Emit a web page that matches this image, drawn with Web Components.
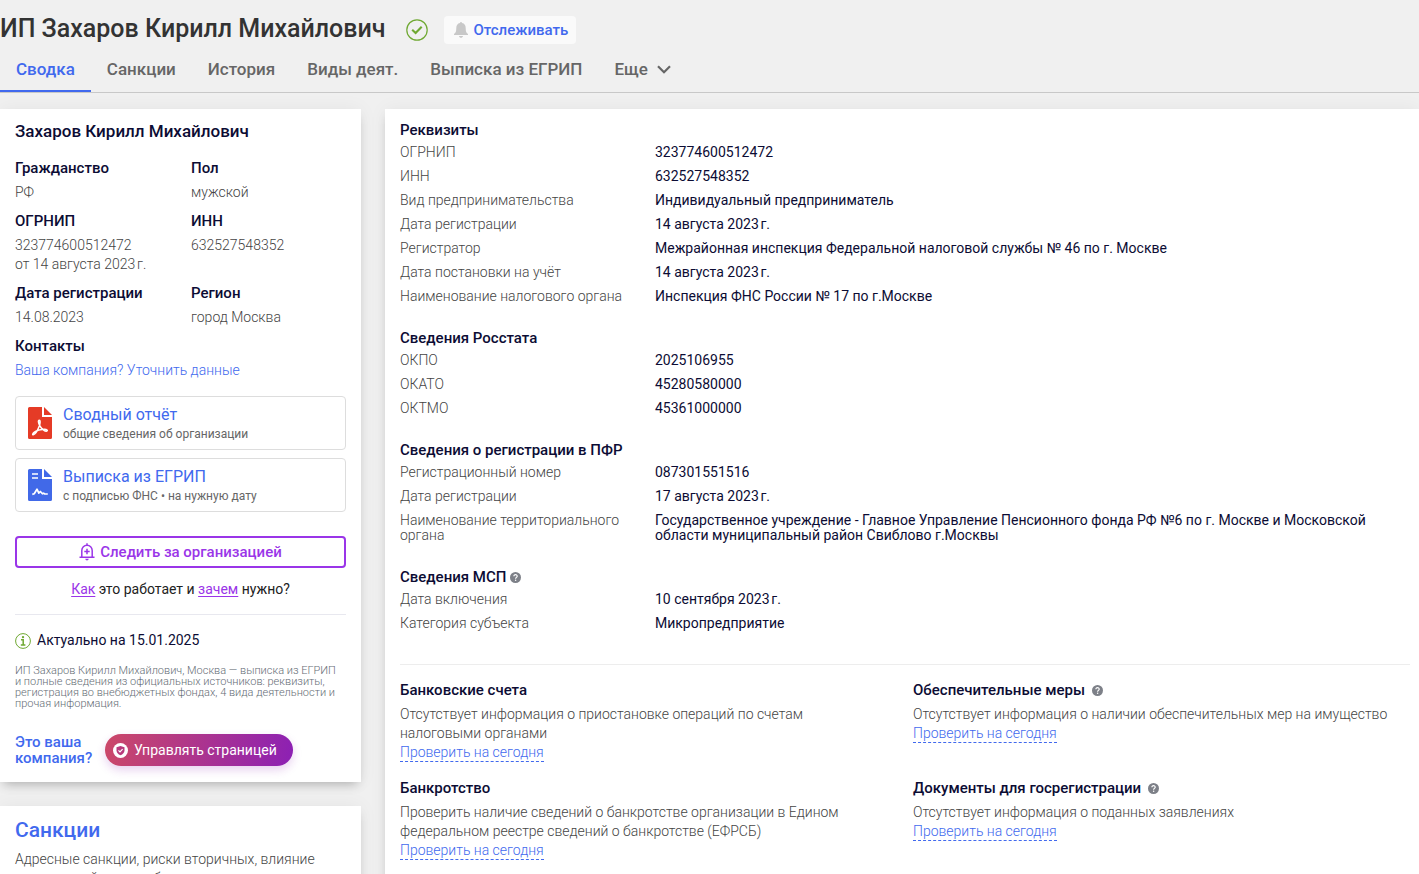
<!DOCTYPE html>
<html lang="ru">
<head>
<meta charset="utf-8">
<meta name="viewport" content="width=device-width, initial-scale=1">
<title>ИП Захаров Кирилл Михайлович</title>
<style>
  body {
    margin: 0;
    background: #f0f0f0;
    color: #0c0c34;
    font-family: Roboto, "Liberation Sans", sans-serif;
    font-size: 14px;
    line-height: 19px;
    --link: #4169ee;
    --muted: #444;
  }
</style>
</head>
<body>
<company-page></company-page>

<template id="company-page">
  <style>
    :host { display: block; }
    main { display: grid; grid-template-columns: 361px 1fr; gap: 24px; padding-top: 16px; }
    aside { display: flex; flex-direction: column; gap: 24px; }
    .facts { display: grid; grid-template-columns: 160px 1fr; gap: 10px 16px; margin: 18px 0 0; }
    .docs { display: flex; flex-direction: column; gap: 8px; margin: 16px 0 24px; }
    h2 { margin: 0; font-size: 17px; font-weight: 500; line-height: 19px; }
    h2.big { margin-bottom: 8px; font-size: 21px; line-height: 23px; }
    a { color: var(--link); text-decoration: none; }
    .light { font-weight: 300; color: var(--muted); }
    p { margin: 0; }
    .how { margin: 12px 0 15px; text-align: center; color: #222; }
    .how a { color: #9a35e8; text-decoration: underline; text-underline-offset: 2px; }
    hr { margin: 0; border: 0; border-top: 1px solid #e8e8ef; }
    .fresh { display: flex; align-items: center; gap: 6px; margin: 16px 0 15px; }
    .note { padding-right: 4px; font-size: 11px; line-height: 11px; font-weight: 300; color: #666e76; }
    .own { display: flex; align-items: center; gap: 12px; margin-top: 25px; }
    .own > a { font-size: 15px; font-weight: 500; line-height: 16px; width: 78px; }
    .sections { display: flex; flex-direction: column; gap: 27px; }
    .line { margin: 33px 0 18px; border-top-color: #ededed; }
    .checks { display: grid; grid-template-columns: 1fr 1fr; gap: 19px 16px; }
  </style>
  <page-header>ИП Захаров Кирилл Михайлович</page-header>
  <tab-bar></tab-bar>
  <main>
    <aside>
      <info-card>
        <h2>Захаров Кирилл Михайлович</h2>
        <div class="facts">
          <fact-item label="Гражданство">РФ</fact-item>
          <fact-item label="Пол">мужской</fact-item>
          <fact-item label="ОГРНИП">323774600512472<br>от 14 августа 2023&#8239;г.</fact-item>
          <fact-item label="ИНН">632527548352</fact-item>
          <fact-item label="Дата регистрации">14.08.2023</fact-item>
          <fact-item label="Регион">город Москва</fact-item>
          <fact-item label="Контакты" wide><a href="#claim">Ваша компания? Уточнить данные</a></fact-item>
        </div>
        <div class="docs">
          <doc-link kind="pdf" heading="Сводный отчёт">общие сведения об организации</doc-link>
          <doc-link kind="sign" heading="Выписка из ЕГРИП">с подписью ФНС • на нужную дату</doc-link>
        </div>
        <follow-button>Следить за организацией</follow-button>
        <p class="how"><a href="#how">Как</a> это работает и <a href="#why">зачем</a> нужно?</p>
        <hr>
        <p class="fresh">
          <svg width="16" height="16" viewBox="0 0 16 16" fill="none" stroke="#6fa832"><circle cx="8" cy="8" r="7.4"/><path d="M6 6.7h2.2v5M5.8 11.9h4.6" stroke-width="1.5"/><circle cx="8" cy="4.1" r="1.2" fill="#6fa832" stroke="none"/></svg>
          <span>Актуально на 15.01.2025</span>
        </p>
        <p class="note">ИП Захаров Кирилл Михайлович, Москва — выписка из ЕГРИП и полные сведения из официальных источников: реквизиты, регистрация во внебюджетных фондах, 4 вида деятельности и прочая информация.</p>
        <div class="own">
          <a href="#claim">Это ваша компания?</a>
          <manage-button>Управлять страницей</manage-button>
        </div>
      </info-card>
      <info-card>
        <h2 class="big"><a href="#sanctions">Санкции</a></h2>
        <p class="light">Адресные санкции, риски вторичных, влияние ограничений на весь бизнес</p>
      </info-card>
    </aside>
    <info-card wide>
      <div class="sections">
        <req-section heading="Реквизиты">
          <req-row label="ОГРНИП">323774600512472</req-row>
          <req-row label="ИНН">632527548352</req-row>
          <req-row label="Вид предпринимательства">Индивидуальный предприниматель</req-row>
          <req-row label="Дата регистрации">14 августа 2023&#8239;г.</req-row>
          <req-row label="Регистратор">Межрайонная инспекция Федеральной налоговой службы № 46 по г. Москве</req-row>
          <req-row label="Дата постановки на учёт">14 августа 2023&#8239;г.</req-row>
          <req-row label="Наименование налогового органа">Инспекция ФНС России № 17 по г.Москве</req-row>
        </req-section>
        <req-section heading="Сведения Росстата">
          <req-row label="ОКПО">2025106955</req-row>
          <req-row label="ОКАТО">45280580000</req-row>
          <req-row label="ОКТМО">45361000000</req-row>
        </req-section>
        <req-section heading="Сведения о регистрации в ПФР">
          <req-row label="Регистрационный номер">087301551516</req-row>
          <req-row label="Дата регистрации">17 августа 2023&#8239;г.</req-row>
          <req-row label="Наименование территориального органа">Государственное учреждение - Главное Управление Пенсионного фонда РФ №6 по г. Москве и Московской области муниципальный район Свиблово г.Москвы</req-row>
        </req-section>
        <req-section heading="Сведения МСП" help>
          <req-row label="Дата включения">10 сентября 2023&#8239;г.</req-row>
          <req-row label="Категория субъекта">Микропредприятие</req-row>
        </req-section>
      </div>
      <hr class="line">
      <div class="checks">
        <check-item heading="Банковские счета">Отсутствует информация о приостановке операций по счетам налоговыми органами</check-item>
        <check-item heading="Обеспечительные меры" help>Отсутствует информация о наличии обеспечительных мер на имущество</check-item>
        <check-item heading="Банкротство">Проверить наличие сведений о банкротстве организации в Едином федеральном реестре сведений о банкротстве (ЕФРСБ)</check-item>
        <check-item heading="Документы для госрегистрации" help>Отсутствует информация о поданных заявлениях</check-item>
      </div>
    </info-card>
  </main>
</template>

<script>
  const define = (name, render) => customElements.define(name, class extends HTMLElement {
    connectedCallback() {
      if (!this.shadowRoot) this.attachShadow({ mode: 'open' }).innerHTML = render(this);
    }
  });

  define('help-icon', () => `
    <style>:host { display: inline-flex; } svg { display: block; }</style>
    <svg width="11" height="11" viewBox="0 0 11 11" role="img" aria-label="Справка"><circle cx="5.5" cy="5.5" r="5.5" fill="#7d8088"/><path d="M3.9 4.3c0-2.2 3.4-2.1 3.3 0 0 1.1-1.6 1.1-1.6 2.4" fill="none" stroke="#fff" stroke-width="1.2"/><circle cx="5.6" cy="8.2" r=".75" fill="#fff"/></svg>`);

  define('page-header', () => `
    <style>
      :host { display: flex; align-items: center; height: 60px; }
      h1 { margin: 0; padding-bottom: 2px; font-size: 25px; line-height: 28px; font-weight: 500; color: #333; }
      .ok { margin: 0 16px 0 20px; }
      button { display: flex; align-items: center; gap: 6px; height: 28px; padding: 0 8px 0 10px; border: 0; border-radius: 4px; background: #fafafa; color: var(--link); font: 500 15px/19px Roboto, "Liberation Sans", sans-serif; }
    </style>
    <h1><slot></slot></h1>
    <svg class="ok" width="22" height="22" viewBox="0 0 22 22" fill="none" stroke="#6fa832"><circle cx="11" cy="11" r="10.2" stroke-width="1.2"/><path d="M6.2 10.8l3.4 3.3 6.1-6.3" stroke-width="2.1"/></svg>
    <button type="button">
      <svg width="14" height="16" viewBox="0 0 14 16" fill="#c8c8c8"><path d="M6 1.1a1 1 0 0 1 2 0C10.5 1.6 11.7 3.4 11.7 6c0 3.7.6 4.9 2.3 6v1H0v-1c1.7-1.100 2.3-2.3 2.3-6C2.3 3.4 3.5 1.6 6 1.1zM5 14h4c-.3 2.4-3.7 2.4-4 0z"/></svg>
      Отслеживать
    </button>`);

  define('tab-bar', () => `
    <style>
      :host { display: block; border-bottom: 1px solid #c8c8c8; }
      nav { display: flex; height: 32px; font-size: 17px; font-weight: 500; line-height: 19px; }
      a, button { box-sizing: border-box; height: 32px; padding: 0 16px 11px; color: #666; text-decoration: none; white-space: nowrap; }
      a[aria-current] { color: var(--link); border-bottom: 2px solid var(--link); }
      button { display: flex; align-items: center; gap: 9px; padding-bottom: 13px; border: 0; background: none; font: inherit; }
    </style>
    <nav>
      <a href="#summary" aria-current="page">Сводка</a>
      <a href="#sanctions">Санкции</a>
      <a href="#history">История</a>
      <a href="#activities">Виды деят.</a>
      <a href="#extract">Выписка из ЕГРИП</a>
      <button type="button">Еще <svg width="14" height="9" viewBox="0 0 14 9" fill="none" stroke="#666" stroke-width="2.2"><path d="M1 1.2l6 6 6-6"/></svg></button>
    </nav>`);

  define('info-card', () => `
    <style>
      :host { display: block; box-sizing: border-box; min-width: 0; padding: 13px 15px 16px; background: #fff; box-shadow: 0 6px 10px -4px rgba(0,0,0,.25), 0 0 18px rgba(0,0,0,.05); }
      :host([wide]) { padding-top: 14px; padding-right: 9px; }
    </style>
    <slot></slot>`);

  define('fact-item', el => `
    <style>
      :host { display: block; }
      :host([wide]) { grid-column: 1 / -1; }
      h3 { margin: 0 0 5px; font-size: 15px; line-height: 19px; font-weight: 500; }
      div { font-weight: 300; color: var(--muted); }
    </style>
    <h3>${el.getAttribute('label')}</h3><div><slot></slot></div>`);

  const sheets = {
    pdf: `<path fill="#e53b26" d="M1.5 0H14v10h10v20.500a1.500 1.500 0 0 1-1.500 1.500h-21A1.500 1.500 0 0 1 0 30.500v-29A1.500 1.500 0 0 1 1.500 0zM16 0l8 8h-8z"/><path fill="none" stroke="#fff" stroke-width="1.500" stroke-linejoin="round" d="M11.300 13.200c-1.500 0-.8 3 .3 5.200 1.600 3 4.700 6.100 6.700 5.800 2.200-.6.500-2.100-2.100-2-3.500.1-7.800 1.500-9.800 3-1.700 1.300-2.300 2.800-1.100 2.600 2-.4 4.600-5 6-8.700.9-2.700 1.200-5.900 0-5.900z"/>`,
    sign: `<path fill="#4169e8" d="M1.5 0H14v10h10v20.500a1.500 1.500 0 0 1-1.500 1.500h-21A1.500 1.500 0 0 1 0 30.500v-29A1.500 1.500 0 0 1 1.500 0zM16 0l8 8h-8z"/><path fill="none" stroke="#fff" stroke-width="1.500" d="M4 5h6M4 9h6"/><path fill="none" stroke="#fff" stroke-width="1.700" stroke-linejoin="round" d="M4.300 25.400l1.900-.6 2.800-4.600 1.800 3.900 1.600-1.600 2 2.300 1.200-.6 1.200.8h3"/>`
  };
  define('doc-link', el => `
    <style>
      :host { display: block; }
      a { display: flex; align-items: center; gap: 11px; box-sizing: border-box; height: 54px; padding: 0 12px; border: 1px solid #ddd; border-radius: 4px; text-decoration: none; }
      span { padding-top: 2px; }
      strong { display: block; font-size: 16px; line-height: 20px; font-weight: 400; color: var(--link); }
      small { display: block; font-size: 12px; line-height: 18px; color: #666; }
    </style>
    <a href="#${el.getAttribute('kind')}">
      <svg width="24" height="32" viewBox="0 0 24 32">${sheets[el.getAttribute('kind')]}</svg>
      <span><strong>${el.getAttribute('heading')}</strong><small><slot></slot></small></span>
    </a>`);

  define('follow-button', () => `
    <style>
      :host { display: block; }
      button { display: flex; align-items: center; justify-content: center; gap: 5px; box-sizing: border-box; width: 100%; height: 32px; padding: 0; border: 2px solid #9a35e8; border-radius: 4px; background: #fff; color: #9a35e8; font: 500 15px/19px Roboto, "Liberation Sans", sans-serif; }
    </style>
    <button type="button">
      <svg width="16" height="18" viewBox="0 0 16 18" fill="none" stroke="#9a35e8" stroke-width="1.500"><path d="M.5 14.300h15M2.800 14V7.500a5.200 5.200 0 0 1 10.400 0V14M8 2.300V.3M8 5.800v5.400M5.300 8.500h5.400"/><path d="M6.300 15.800h3.400c-.2 2.200-3.200 2.200-3.400 0z" fill="#9a35e8" stroke="none"/></svg>
      <slot></slot>
    </button>`);

  define('manage-button', () => `
    <style>
      :host { display: block; }
      button { display: flex; align-items: center; gap: 6px; height: 32px; padding: 0 16px 0 8px; border: 0; border-radius: 16px; background: linear-gradient(100deg, #cc4868, #8c20b4); box-shadow: 0 4px 10px rgba(140,32,180,.2); color: #fff; font: 400 14px/19px Roboto, "Liberation Sans", sans-serif; white-space: nowrap; }
    </style>
    <button type="button">
      <svg width="15" height="15" viewBox="0 0 15 15"><circle cx="7.5" cy="7.5" r="7.5" fill="#fff"/><path d="M7.5 3l4 1.300v3c0 2.400-1.700 4-4 5-2.300-1-4-2.600-4-5v-3z" fill="#b83a7c"/><path d="M5.500 7.300l1.500 1.500 2.600-2.700" fill="none" stroke="#fff" stroke-width="1.200"/></svg>
      <slot></slot>
    </button>`);

  define('req-section', el => `
    <style>
      :host { display: block; }
      h3 { display: flex; align-items: center; gap: 4px; margin: 0 0 7px; font-size: 15px; line-height: 15px; font-weight: 500; }
      div { display: grid; gap: 9px; }
    </style>
    <h3>${el.getAttribute('heading')}${el.hasAttribute('help') ? '<help-icon></help-icon>' : ''}</h3>
    <div><slot></slot></div>`);

  define('req-row', el => `
    <style>
      :host { display: block; }
      dl { display: grid; grid-template-columns: 240px 1fr; gap: 15px; margin: 0; line-height: 15px; }
      dt { font-weight: 300; color: var(--muted); }
      dd { margin: 0; }
    </style>
    <dl><dt>${el.getAttribute('label')}</dt><dd><slot></slot></dd></dl>`);

  define('check-item', el => `
    <style>
      :host { display: block; font-weight: 300; color: var(--muted); }
      h3 { display: flex; align-items: center; gap: 7px; margin: 0 0 7px; font-size: 15px; line-height: 15px; font-weight: 500; color: #0c0c34; }
      p { margin: 0; padding-right: 16px; }
      a { display: inline-block; line-height: 18px; color: var(--link); text-decoration: none; border-bottom: 1px dashed var(--link); }
    </style>
    <h3>${el.getAttribute('heading')}${el.hasAttribute('help') ? '<help-icon></help-icon>' : ''}</h3>
    <p><slot></slot></p><a href="#check">Проверить на сегодня</a>`);

  customElements.define('company-page', class extends HTMLElement {
    constructor() {
      super();
      this.attachShadow({ mode: 'open' }).append(document.getElementById('company-page').content.cloneNode(true));
    }
  });
</script>
</body>
</html>
